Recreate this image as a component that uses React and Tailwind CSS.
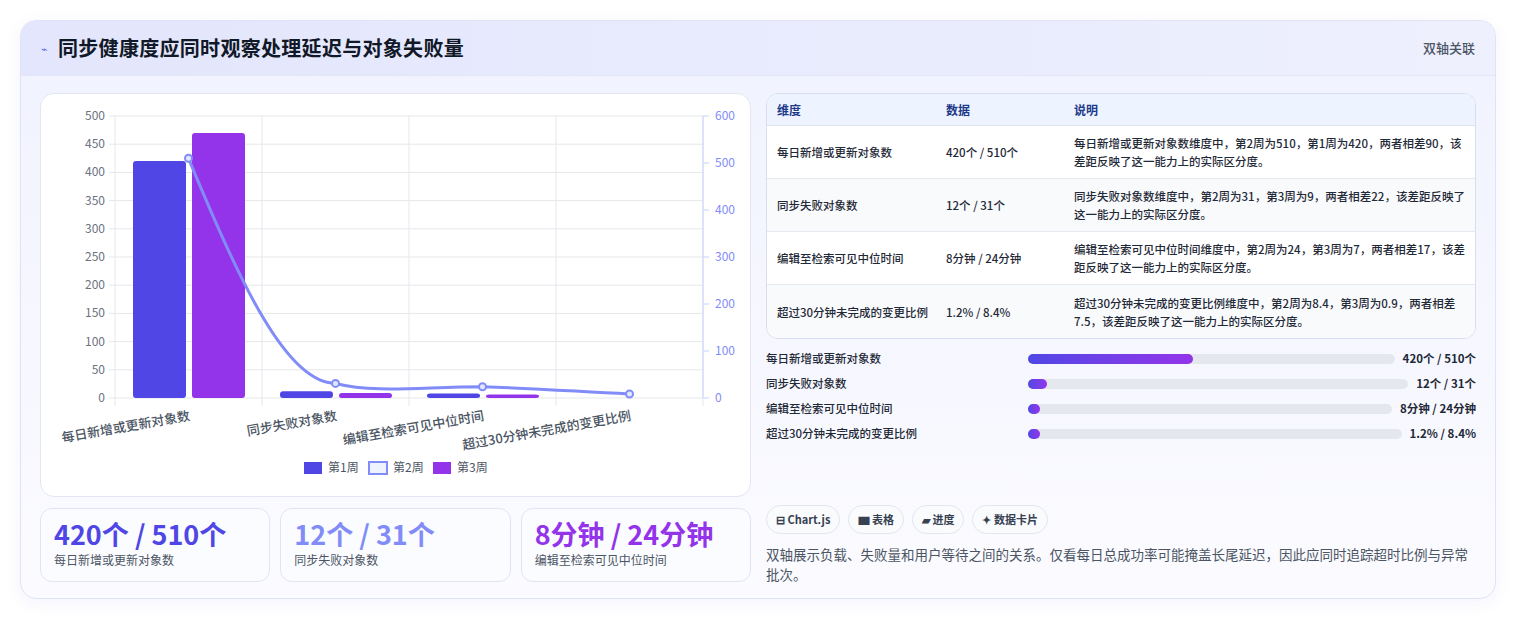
import React from "react";

const F = { fontFamily: '"Noto Sans CJK SC","Noto Sans",sans-serif' };

const rows = [
  ["每日新增或更新对象数", "420个 / 510个", "每日新增或更新对象数维度中，第2周为510，第1周为420，两者相差90，该差距反映了这一能力上的实际区分度。"],
  ["同步失败对象数", "12个 / 31个", "同步失败对象数维度中，第2周为31，第3周为9，两者相差22，该差距反映了这一能力上的实际区分度。"],
  ["编辑至检索可见中位时间", "8分钟 / 24分钟", "编辑至检索可见中位时间维度中，第2周为24，第3周为7，两者相差17，该差距反映了这一能力上的实际区分度。"],
  ["超过30分钟未完成的变更比例", "1.2% / 8.4%", "超过30分钟未完成的变更比例维度中，第2周为8.4，第3周为0.9，两者相差7.5，该差距反映了这一能力上的实际区分度。"],
];
const progress = [
  ["每日新增或更新对象数", "420个 / 510个", 45],
  ["同步失败对象数", "12个 / 31个", 5],
  ["编辑至检索可见中位时间", "8分钟 / 24分钟", 2],
  ["超过30分钟未完成的变更比例", "1.2% / 8.4%", 2],
];

function Chart() {
  const x0 = 74, x1 = 662, y0 = 22, y1 = 304;
  const h = y1 - y0;
  const L = (v) => y1 - (v / 500) * h;
  const R = (v) => y1 - (v / 600) * h;
  const cw = (x1 - x0) / 4;
  const w1 = [420, 12, 8];
  const w3 = [470, 9, 6];
  const w2 = [510, 31, 24, 8.4];
  const pts = w2.map((v, i) => [x0 + cw * i + cw / 2, R(v)]);
  const labels = ["每日新增或更新对象数", "同步失败对象数", "编辑至检索可见中位时间", "超过30分钟未完成的变更比例"];
  return (
    <svg width="710" height="403" viewBox="0 0 710 403" style={F}>
      {[0, 50, 100, 150, 200, 250, 300, 350, 400, 450, 500].map((v) => (
        <g key={v}>
          <line x1={x0 - 6} x2={x1} y1={L(v)} y2={L(v)} stroke="#e5e7eb" />
          <text x={x0 - 10} y={L(v) + 4} fontSize="12" fill="#6b7280" textAnchor="end">{v}</text>
        </g>
      ))}
      {[0, 100, 200, 300, 400, 500, 600].map((v) => (
        <g key={v}>
          <line x1={x1} x2={x1 + 6} y1={R(v)} y2={R(v)} stroke="#c7d2fe" />
          <text x={x1 + 12} y={R(v) + 4} fontSize="12" fill="#818cf8">{v}</text>
        </g>
      ))}
      {[0, 1, 2, 3, 4].map((i) => (
        <line key={i} x1={x0 + cw * i} x2={x0 + cw * i} y1={y0} y2={y1 + 8} stroke="#e5e7eb" />
      ))}
      <line x1={x1} x2={x1} y1={y0} y2={y1} stroke="#c7d2fe" />
      {w1.map((v, i) => (
        <rect key={"a" + i} x={x0 + cw * i + 18} y={L(v)} width="53" height={y1 - L(v)} rx="3" fill="#4f46e5" />
      ))}
      {w3.map((v, i) => (
        <rect key={"b" + i} x={x0 + cw * i + 77} y={L(v)} width="53" height={y1 - L(v)} rx="3" fill="#9333ea" />
      ))}
      <path
        d={`M${pts[0][0]},${pts[0][1]} C${pts[0][0] + 50},${pts[0][1] + 120} ${pts[1][0] - 50},${pts[1][1]} ${pts[1][0]},${pts[1][1]} C${pts[1][0] + 40},${pts[1][1] + 10} ${pts[2][0] - 60},${pts[2][1]} ${pts[2][0]},${pts[2][1]} C${pts[2][0] + 60},${pts[2][1] + 2} ${pts[3][0] - 60},${pts[3][1] - 3} ${pts[3][0]},${pts[3][1]}`}
        fill="none" stroke="#818cf8" strokeWidth="3"
      />
      {pts.map((p, i) => (
        <circle key={i} cx={p[0]} cy={p[1]} r="3.5" fill="#e0e7ff" stroke="#818cf8" strokeWidth="2" />
      ))}
      {labels.map((t, i) => (
        <text key={i} x={x0 + cw * i + cw / 2 + 2} y={y1 + 22} fontSize="13" fontWeight="500" fill="#4b5563" textAnchor="end" transform={`rotate(-10 ${x0 + cw * i + cw / 2 + 2} ${y1 + 22})`}>{t}</text>
      ))}
      <rect x="263" y="368" width="18" height="12" fill="#4f46e5" />
      <text x="287" y="378" fontSize="12" fill="#4b5563">第1周</text>
      <rect x="328" y="368" width="18" height="12" fill="#eef2ff" stroke="#818cf8" strokeWidth="2" />
      <text x="352" y="378" fontSize="12" fill="#4b5563">第2周</text>
      <rect x="392" y="368" width="18" height="12" fill="#9333ea" />
      <text x="416" y="378" fontSize="12" fill="#4b5563">第3周</text>
    </svg>
  );
}

export default function App() {
  return (
    <div className="w-[1516px] h-[620px] bg-white pt-[20px] px-[20px]" style={F}>
      <div className="w-[1476px] h-[579px] rounded-[16px] border border-[#dfe3f5] overflow-hidden bg-gradient-to-b from-[#f0f2fe] to-[#fbfbff] shadow-[0_4px_16px_rgba(99,102,241,0.08)]">
        <div className="h-[55px] flex items-center justify-between px-[20px] bg-gradient-to-r from-[#e3e6fc] to-[#eef0fe] border-b border-[#e3e6f6]">
          <div className="flex items-center gap-[10px]">
            <span className="text-[#6366f1] text-[11px]">⌁</span>
            <span className="text-[20px] font-bold text-[#111827] tracking-[0.3px]">同步健康度应同时观察处理延迟与对象失败量</span>
          </div>
          <span className="text-[13px] font-medium text-[#4b5563]">双轴关联</span>
        </div>
        <div className="flex gap-[15px] px-[19px] pt-[17px]">
          <div className="w-[711px] flex flex-col gap-[11px]">
            <div className="h-[404px] bg-white rounded-[14px] border border-[#e3e6f2]">
              <Chart />
            </div>
            <div className="grid grid-cols-3 gap-[10px]">
              {[["420个 / 510个", "每日新增或更新对象数", "text-[#4f46e5]"], ["12个 / 31个", "同步失败对象数", "text-[#818cf8]"], ["8分钟 / 24分钟", "编辑至检索可见中位时间", "text-[#9333ea]"]].map(([v, l, c]) => (
                <div key={l} className="h-[74px] rounded-[12px] border border-[#e0e5f4] bg-[#fbfcff] px-[13px] pt-[8px]">
                  <div className={`text-[27px] leading-[34px] font-bold ${c}`}>{v}</div>
                  <div className="text-[12px] text-[#4b5563]">{l}</div>
                </div>
              ))}
            </div>
          </div>
          <div className="flex-1 flex flex-col">
            <div className="rounded-[12px] border border-[#d8def0] overflow-hidden bg-white">
              <div className="flex h-[32px] items-center bg-[#eef4ff] text-[12px] font-bold text-[#1e3a8a] border-b border-[#dde3f0]">
                <div className="w-[179px] pl-[10px]">维度</div>
                <div className="w-[128px]">数据</div>
                <div className="flex-1">说明</div>
              </div>
              {rows.map((r, i) => (
                <div key={i} className={`flex items-center h-[53px] text-[11.5px] font-medium leading-[18px] text-[#1f2937] ${i % 2 ? "bg-[#f9fafc]" : "bg-white"} ${i < 3 ? "border-b border-[#e5e9f2]" : ""}`}>
                  <div className="w-[179px] pl-[10px] pr-[16px]">{r[0]}</div>
                  <div className="w-[128px]">{r[1]}</div>
                  <div className="flex-1 pr-[10px]">{r[2]}</div>
                </div>
              ))}
            </div>
            <div className="mt-[10px] flex flex-col gap-[6px]">
              {progress.map(([l, v, p]) => (
                <div key={l} className="flex items-center gap-[8px] h-[19px] text-[11.5px] font-medium text-[#1f2937]">
                  <div className="w-[254px] shrink-0">{l}</div>
                  <div className="flex-1 h-[10px] rounded-full bg-[#e5e7ef]">
                    <div className="h-full rounded-full bg-gradient-to-r from-[#4f46e5] to-[#9333ea] min-w-[12px]" style={{ width: p + "%" }} />
                  </div>
                  <div className="font-bold">{v}</div>
                </div>
              ))}
            </div>
            <div className="flex gap-[8px] mt-[62px]">
              {["⊟ Chart.js", "▆ 表格", "▰ 进度", "✦ 数据卡片"].map((t) => (
                <span key={t} className="h-[29px] px-[9px] flex items-center rounded-full border border-[#e3e6ef] bg-[#fafbfd] text-[11px] font-bold text-[#374151]">{t}</span>
              ))}
            </div>
            <p className="mt-[10px] pr-[8px] text-[13.5px] leading-[20px] text-[#4b5563]">双轴展示负载、失败量和用户等待之间的关系。仅看每日总成功率可能掩盖长尾延迟，因此应同时追踪超时比例与异常批次。</p>
          </div>
        </div>
      </div>
    </div>
  );
}
